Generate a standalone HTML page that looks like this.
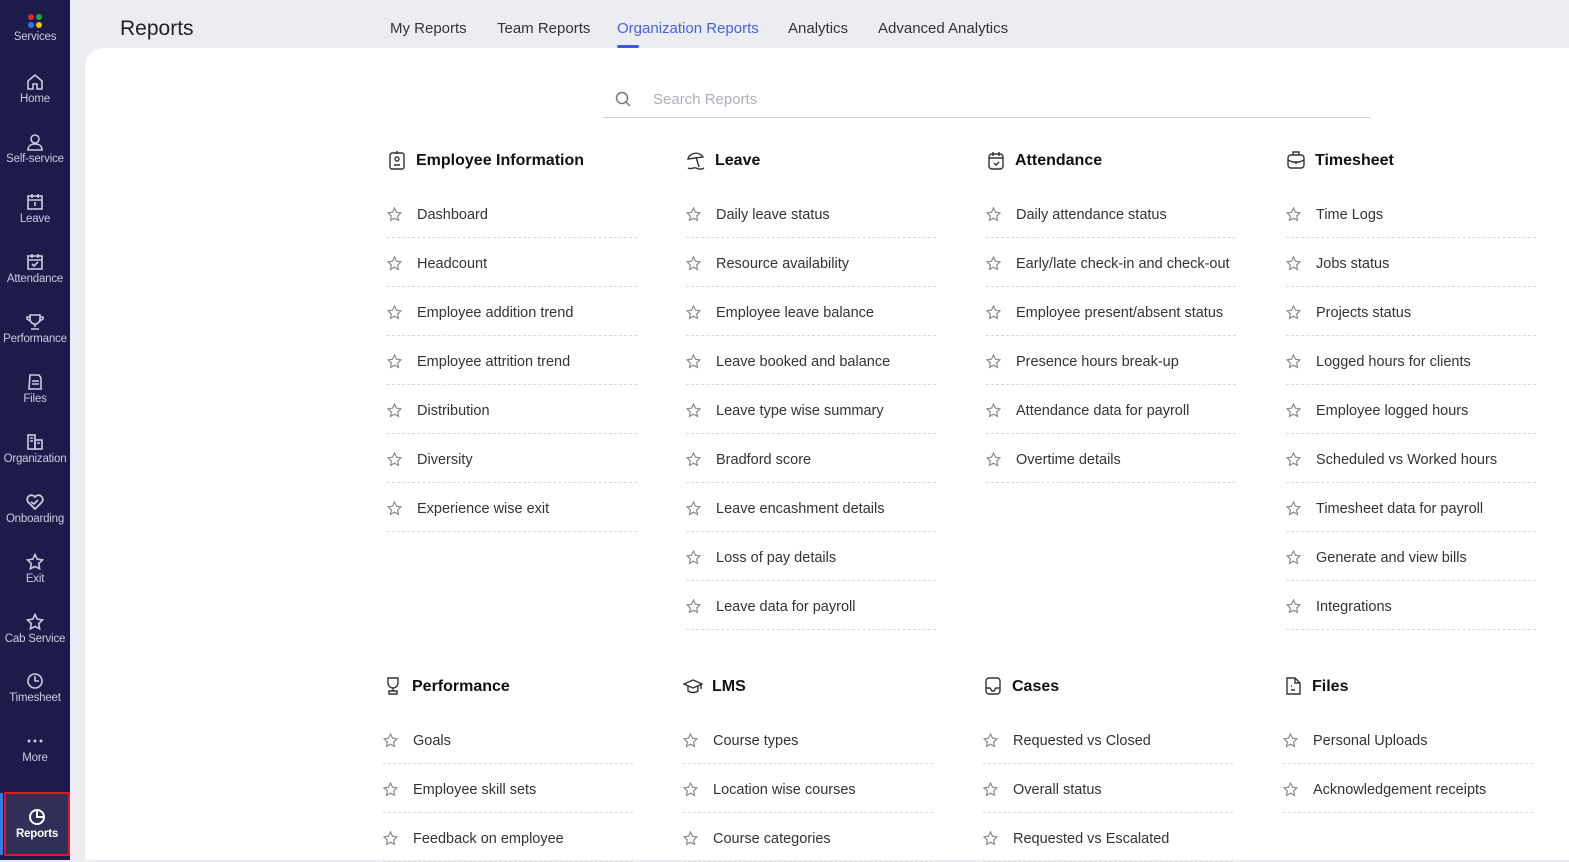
<!DOCTYPE html>
<html><head><meta charset="utf-8">
<style>
*{margin:0;padding:0;box-sizing:border-box}
body{width:1569px;height:860px;overflow:hidden;background:#ecedf3;font-family:"Liberation Sans",sans-serif;position:relative;color:#333}
#side{position:absolute;left:0;top:0;width:70px;height:860px;background:#1d1b4a}
.si{position:absolute;left:0;width:70px;text-align:center;color:#c9cbe3;font-size:11.5px;white-space:nowrap;letter-spacing:-0.2px}
.si svg{display:block;margin:0 auto 2px}
#panel{position:absolute;left:85px;top:48px;width:1484px;height:812px;background:#fff;border-top-left-radius:18px}
.title{position:absolute;left:120px;top:17px;font-size:21px;color:#222}
.tab{position:absolute;top:20px;font-size:15px;color:#333}
.col{position:absolute;width:250px}
.hd{height:24px;line-height:24px;font-size:16px;font-weight:bold;color:#111;display:flex;align-items:center;gap:9px;margin-bottom:17px;white-space:nowrap}
.hd span{position:relative;top:1px}
.row{height:49px;border-bottom:1px dashed #d8d8d8;font-size:14.5px;color:#333;display:flex;align-items:center;white-space:nowrap}
.row span{position:relative;top:2px}
.row svg{margin-right:15px;flex:none;position:relative;top:1px}
</style></head><body>
<div id="side">
 <div class="si" style="top:13px"><svg width="16" height="16"><circle cx="4" cy="4" r="3" fill="#e0262f"/><circle cx="12" cy="4" r="3" fill="#1fa64a"/><circle cx="4" cy="12" r="3" fill="#1a7fe0"/><circle cx="12" cy="12" r="3" fill="#f5c400"/></svg>Services</div>
 <div class="si" style="top:73px"><svg width="18" height="18" fill="none" stroke="#c9cbe3" stroke-width="1.6"><path d="M2 8L9 2l7 6v8h-5v-5H7v5H2z"/></svg>Home</div>
 <div class="si" style="top:133px"><svg width="18" height="18" fill="none" stroke="#c9cbe3" stroke-width="1.6"><circle cx="9" cy="6" r="4"/><path d="M2 17c0-4 3-6 7-6s7 2 7 6z"/></svg>Self-service</div>
 <div class="si" style="top:193px"><svg width="18" height="18" fill="none" stroke="#c9cbe3" stroke-width="1.6"><rect x="2" y="3" width="14" height="13"/><path d="M2 7h14M6 1v4M12 1v4M9 9v4"/></svg>Leave</div>
 <div class="si" style="top:253px"><svg width="18" height="18" fill="none" stroke="#c9cbe3" stroke-width="1.6"><rect x="2" y="3" width="14" height="13"/><path d="M2 7h14M6 1v4M12 1v4M6 11l2 2 4-4"/></svg>Attendance</div>
 <div class="si" style="top:313px"><svg width="18" height="18" fill="none" stroke="#c9cbe3" stroke-width="1.6"><path d="M4 2h10v4a5 5 0 0 1-10 0zM9 11v3M5 16h8M4 4H1v2l3 2M14 4h3v2l-3 2"/></svg>Performance</div>
 <div class="si" style="top:373px"><svg width="18" height="18" fill="none" stroke="#c9cbe3" stroke-width="1.6"><path d="M4 2h9l2 3v11H3zM6 8h7M6 11h7"/></svg>Files</div>
 <div class="si" style="top:433px"><svg width="18" height="18" fill="none" stroke="#c9cbe3" stroke-width="1.6"><rect x="2" y="2" width="7" height="14"/><rect x="9" y="7" width="7" height="9"/><path d="M4 5h3M4 8h3M11 10h3"/></svg>Organization</div>
 <div class="si" style="top:493px"><svg width="18" height="18" fill="none" stroke="#c9cbe3" stroke-width="1.8"><path d="M9 16L2 9a4 4 0 0 1 7-5 4 4 0 0 1 7 5z"/><path d="M5 9l3 2 4-4"/></svg>Onboarding</div>
 <div class="si" style="top:553px"><svg width="18" height="18" fill="none" stroke="#c9cbe3" stroke-width="1.6"><path d="M9 1.5l2.3 4.7 5.2.8-3.8 3.6.9 5.2L9 13.4l-4.6 2.4.9-5.2L1.5 7l5.2-.8z"/></svg>Exit</div>
 <div class="si" style="top:613px"><svg width="18" height="18" fill="none" stroke="#c9cbe3" stroke-width="1.6"><path d="M9 1.5l2.3 4.7 5.2.8-3.8 3.6.9 5.2L9 13.4l-4.6 2.4.9-5.2L1.5 7l5.2-.8z"/></svg>Cab Service</div>
 <div class="si" style="top:672px"><svg width="18" height="18" fill="none" stroke="#c9cbe3" stroke-width="1.6"><circle cx="9" cy="9" r="7"/><path d="M9 4v5h4"/></svg>Timesheet</div>
 <div class="si" style="top:732px"><svg width="18" height="18" fill="#c9cbe3"><circle cx="3" cy="9" r="1.5"/><circle cx="9" cy="9" r="1.5"/><circle cx="15" cy="9" r="1.5"/></svg>More</div>
 <div style="position:absolute;left:0;top:793px;width:3px;height:62px;background:#3a7be0"></div>
 <div style="position:absolute;left:4px;top:792px;width:66px;height:64px;background:#302f57;border:2px solid #e1141f"></div>
 <div class="si" style="top:808px;color:#fff;font-weight:bold;left:2px"><svg width="18" height="18" fill="none" stroke="#fff" stroke-width="2"><circle cx="9" cy="9" r="7"/><path d="M9 2v7h7"/></svg>Reports</div>
</div>
<div class="title">Reports</div>
<div class="tab" style="left:390px">My Reports</div>
<div class="tab" style="left:497px">Team Reports</div>
<div class="tab" style="left:617px;color:#4a62d8">Organization Reports</div>
<div style="position:absolute;left:617px;top:45px;width:22px;height:3px;background:#3b5be0;border-radius:2px"></div>
<div class="tab" style="left:788px">Analytics</div>
<div class="tab" style="left:878px">Advanced Analytics</div>
<div id="panel"></div>
<div style="position:absolute;left:603px;top:117px;width:767px;height:1px;background:#cfd0d8"></div>
<svg style="position:absolute;left:615px;top:91px" width="16" height="16" fill="none" stroke="#777" stroke-width="1.5"><circle cx="7" cy="7" r="5.5"/><path d="M11 11l4 4"/></svg>
<div style="position:absolute;left:653px;top:91px;font-size:15px;color:#aeb0be">Search Reports</div>
<div id="cols"></div>
<script>
const star='<svg width="15" height="15" fill="none" stroke="#8a8a8a" stroke-width="1.2"><path d="M7.5 1l2 4.2 4.5.6-3.3 3.1.8 4.5-4-2.2-4 2.2.8-4.5L1 5.8l4.5-.6z"/></svg>';
const ic=p=>'<svg width="20" height="20" fill="none" stroke="#333" stroke-width="1.4">'+p+'</svg>';
const data=[
[387,148,ic('<rect x="3" y="3" width="14" height="16" rx="2"/><circle cx="10" cy="9" r="2"/><path d="M7 15h6M10 1v3"/>'),'Employee Information',['Dashboard','Headcount','Employee addition trend','Employee attrition trend','Distribution','Diversity','Experience wise exit']],
[686,148,ic('<path d="M2 9a8 7 0 0 1 15-2zM10 7l3 10M2 18c3 2 5-1 8 0s5 2 8 0"/>'),'Leave',['Daily leave status','Resource availability','Employee leave balance','Leave booked and balance','Leave type wise summary','Bradford score','Leave encashment details','Loss of pay details','Leave data for payroll']],
[986,148,ic('<rect x="3" y="4" width="14" height="15" rx="3"/><path d="M3 8h14M7 2v4M13 2v4M8 13l2 2 3-3"/>'),'Attendance',['Daily attendance status','Early/late check-in and check-out','Employee present/absent status','Presence hours break-up','Attendance data for payroll','Overtime details']],
[1286,148,ic('<rect x="2" y="5" width="16" height="13" rx="3"/><path d="M7 5V2h6v3M2 10c5 3 11 3 16 0M10 11v3"/>'),'Timesheet',['Time Logs','Jobs status','Projects status','Logged hours for clients','Employee logged hours','Scheduled vs Worked hours','Timesheet data for payroll','Generate and view bills','Integrations']],
[383,674,ic('<path d="M5 2h10v5a5 5 0 0 1-10 0zM10 12v3M6 18h8v-3H6z"/>'),'Performance',['Goals','Employee skill sets','Feedback on employee']],
[683,674,ic('<path d="M1 8l9-4 9 4-9 4zM5 10v5c3 2 7 2 10 0v-5M18 8v5"/>'),'LMS',['Course types','Location wise courses','Course categories']],
[983,674,ic('<path d="M3 5a3 3 0 0 1 3-3h8a3 3 0 0 1 3 3v10a3 3 0 0 1-3 3H6a3 3 0 0 1-3-3zM3 12h4l2 3h2l2-3h4"/>'),'Cases',['Requested vs Closed','Overall status','Requested vs Escalated']],
[1283,674,ic('<path d="M4 2h8l5 5v11H4zM12 2v5h5M8 10h1M8 14h4"/>'),'Files',['Personal Uploads','Acknowledgement receipts']]];
let h='';
for(const [x,y,i,t,items] of data){
 h+=`<div class="col" style="left:${x}px;top:${y}px"><div class="hd">${i}<span>${t}</span></div>`;
 for(const it of items)h+=`<div class="row">${star}<span>${it}</span></div>`;
 h+='</div>';
}
document.getElementById('cols').innerHTML=h;
</script>
</body></html>
